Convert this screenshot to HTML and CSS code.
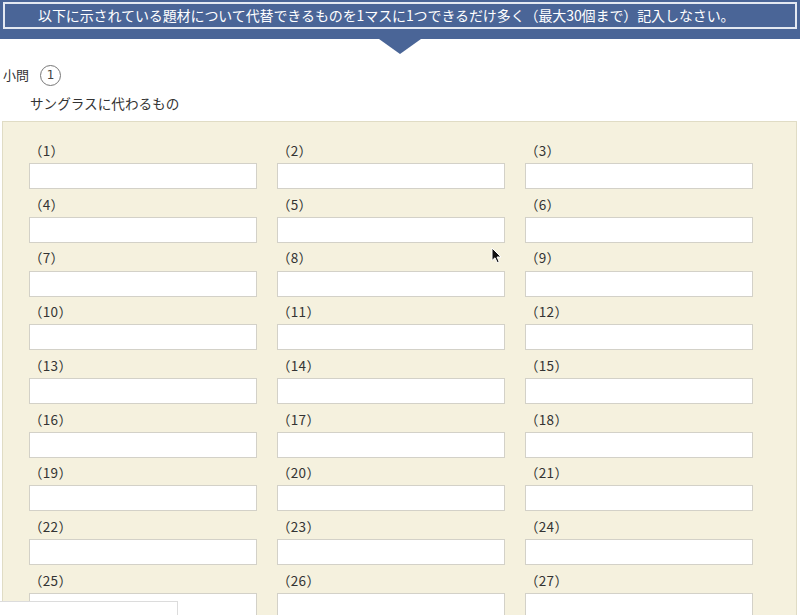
FILE: index.html
```html
<!DOCTYPE html>
<html lang="ja">
<head>
<meta charset="utf-8">
<title>小問1</title>
<link rel="stylesheet" href="styles.css">
</head>
<body>
<header class="banner">
  <div class="banner-inner">以下に示されている題材について代替できるものを1マスに1つできるだけ多く（最大30個まで）記入しなさい。</div>
</header>
<div class="pointer"></div>
<div class="q-head"><span class="q-title">小問</span><span class="q-num">1</span></div>
<p class="q-text">サングラスに代わるもの</p>
<section class="panel">
  <div class="grid">
    <div class="cell"><label class="lbl">（1）</label><input class="box" type="text"></div>
    <div class="cell"><label class="lbl">（2）</label><input class="box" type="text"></div>
    <div class="cell"><label class="lbl">（3）</label><input class="box" type="text"></div>
    <div class="cell"><label class="lbl">（4）</label><input class="box" type="text"></div>
    <div class="cell"><label class="lbl">（5）</label><input class="box" type="text"></div>
    <div class="cell"><label class="lbl">（6）</label><input class="box" type="text"></div>
    <div class="cell"><label class="lbl">（7）</label><input class="box" type="text"></div>
    <div class="cell"><label class="lbl">（8）</label><input class="box" type="text"></div>
    <div class="cell"><label class="lbl">（9）</label><input class="box" type="text"></div>
    <div class="cell"><label class="lbl">（10）</label><input class="box" type="text"></div>
    <div class="cell"><label class="lbl">（11）</label><input class="box" type="text"></div>
    <div class="cell"><label class="lbl">（12）</label><input class="box" type="text"></div>
    <div class="cell"><label class="lbl">（13）</label><input class="box" type="text"></div>
    <div class="cell"><label class="lbl">（14）</label><input class="box" type="text"></div>
    <div class="cell"><label class="lbl">（15）</label><input class="box" type="text"></div>
    <div class="cell"><label class="lbl">（16）</label><input class="box" type="text"></div>
    <div class="cell"><label class="lbl">（17）</label><input class="box" type="text"></div>
    <div class="cell"><label class="lbl">（18）</label><input class="box" type="text"></div>
    <div class="cell"><label class="lbl">（19）</label><input class="box" type="text"></div>
    <div class="cell"><label class="lbl">（20）</label><input class="box" type="text"></div>
    <div class="cell"><label class="lbl">（21）</label><input class="box" type="text"></div>
    <div class="cell"><label class="lbl">（22）</label><input class="box" type="text"></div>
    <div class="cell"><label class="lbl">（23）</label><input class="box" type="text"></div>
    <div class="cell"><label class="lbl">（24）</label><input class="box" type="text"></div>
    <div class="cell"><label class="lbl">（25）</label><input class="box" type="text"></div>
    <div class="cell"><label class="lbl">（26）</label><input class="box" type="text"></div>
    <div class="cell"><label class="lbl">（27）</label><input class="box" type="text"></div>
    <div class="cell"><label class="lbl">（28）</label><input class="box" type="text"></div>
    <div class="cell"><label class="lbl">（29）</label><input class="box" type="text"></div>
    <div class="cell"><label class="lbl">（30）</label><input class="box" type="text"></div>
  </div>
</section>
<div class="popup"></div>
<svg class="cursor" width="12" height="17" viewBox="0 0 12 17"><path d="M1 1 L1 13.5 L4 10.8 L6.2 15.6 L8.2 14.7 L6 10 L10 10 Z" fill="#111" stroke="#fff" stroke-width="1" stroke-linejoin="round"/></svg>
</body>
</html>
```

FILE: styles.css
```css
html, body {
  margin: 0;
  padding: 0;
  overflow: hidden;
  background: #fff;
}
body {
  font-family: "Noto Sans CJK JP", "Noto Sans", sans-serif;
  color: #333;
  position: relative;
  height: 615px;
}
.banner {
  background: #4a6597;
  padding: 2px 3px 10px 3px;
  height: 27px;
}
.banner-inner {
  box-sizing: border-box;
  height: 27px;
  border: 2px solid #e4e9f2;
  color: #fff;
  font-size: 14px;
  line-height: 22px;
  padding-left: 33px;
  white-space: nowrap;
  letter-spacing: -0.1px;
}
.pointer {
  width: 0;
  height: 0;
  margin: 0 auto;
  border-left: 21px solid transparent;
  border-right: 21px solid transparent;
  border-top: 15px solid #4a6597;
}
.q-head {
  display: flex;
  align-items: center;
  gap: 11px;
  margin: 11px 0 0 3px;
  height: 20px;
}
.q-title {
  font-size: 13px;
  line-height: 20px;
}
.q-num {
  box-sizing: border-box;
  width: 21px;
  height: 21px;
  border: 1px solid #777;
  border-radius: 50%;
  display: flex;
  align-items: center;
  justify-content: center;
  font-size: 12px;
  line-height: 1;
  font-family: "DejaVu Sans", sans-serif;
  color: #444;
}
.q-text {
  margin: 8px 0 0 30px;
  font-size: 13.6px;
  line-height: 20px;
}
.panel {
  margin: 8px 3px 0 2px;
  border: 1px solid #e0dcc5;
  background: #f5f1de;
  padding: 13.6px 0 0 26px;
}
.grid {
  display: grid;
  grid-template-columns: repeat(3, 228px);
  column-gap: 20px;
}
.cell {
  display: flex;
  flex-direction: column;
}
.lbl {
  font-size: 13.5px;
  line-height: 20px;
  padding: 4.5px 0 3.2px 0;
  color: #333;
  letter-spacing: 0.3px;
}
.box {
  box-sizing: border-box;
  width: 228px;
  height: 26px;
  margin: 0;
  border: 1px solid #d3d1c8;
  background: #fff;
  border-radius: 0;
  padding: 0 4px;
}
.popup {
  position: absolute;
  left: 0;
  top: 601px;
  width: 177px;
  height: 20px;
  background: #fff;
  border-top: 1px solid #dcdcdc;
  border-right: 1px solid #dcdcdc;
}
.cursor {
  position: absolute;
  left: 491px;
  top: 247px;
}
```
